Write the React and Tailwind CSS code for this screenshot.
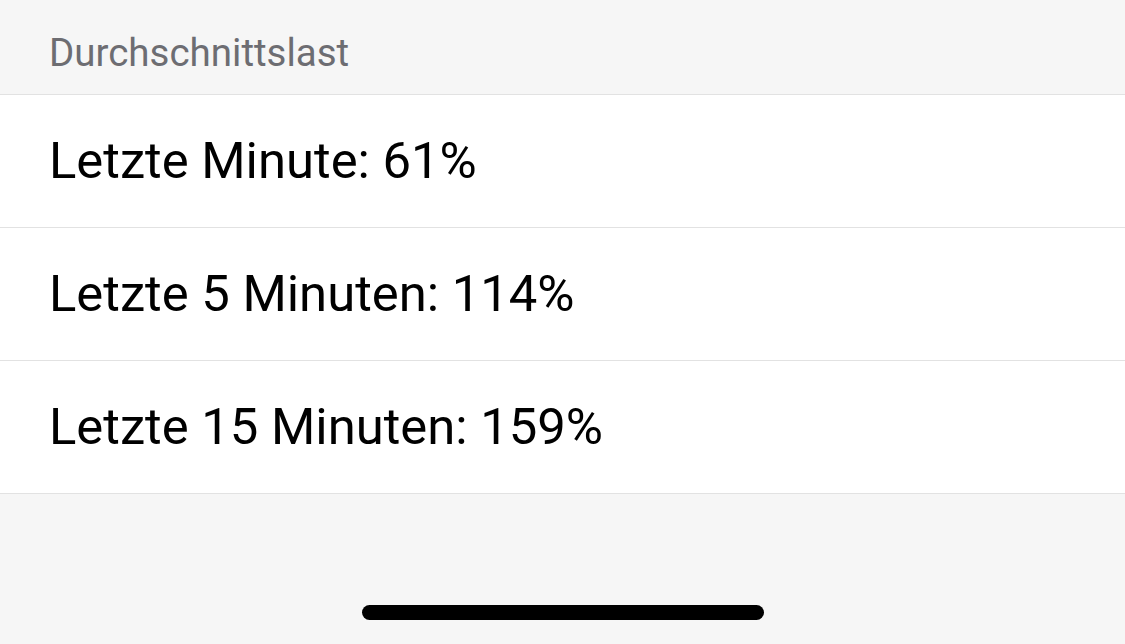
export default function App() {
  const rows = [
    "Letzte Minute: 61%",
    "Letzte 5 Minuten: 114%",
    "Letzte 15 Minuten: 159%",
  ];

  return (
    <div
      className="w-[1125px] h-[644px] bg-[#f6f6f6] flex flex-col overflow-hidden"
      style={{ fontFamily: "Roboto, 'Noto Sans', sans-serif" }}
    >
      <div className="h-[94px] px-[49px] pt-[30px] text-[38.5px] leading-[46px] text-[#6d6d72]">
        Durchschnittslast
      </div>
      <div className="bg-white border-t border-[#e2e2e2]">
        {rows.map((label) => (
          <div
            key={label}
            className="h-[133px] flex items-center px-[49px] border-b border-[#e2e2e2] text-[50.8px] text-black"
          >
            {label}
          </div>
        ))}
      </div>
      <div className="flex-1 flex items-end justify-center pb-[24px]">
        <div className="w-[402px] h-[15px] rounded-full bg-black" />
      </div>
    </div>
  );
}
